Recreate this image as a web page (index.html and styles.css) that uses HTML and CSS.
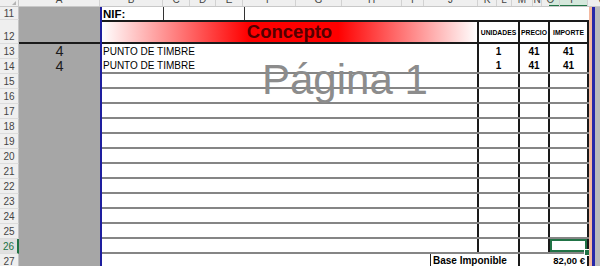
FILE: index.html
```html
<!DOCTYPE html>
<html lang="es">
<head>
<meta charset="utf-8">
<title>Factura</title>
<link rel="stylesheet" href="styles.css">
</head>
<body>
<div class="sheet">
  <div class="colhead">
    <div class="corner"><span class="tri"></span></div>
    <div class="ch w81"><span>A</span></div>
    <div class="ch w63"><span>B</span></div>
    <div class="ch w27"><span>C</span></div>
    <div class="ch w26"><span>D</span></div>
    <div class="ch w27"><span>E</span></div>
    <div class="ch w53"><span>F</span></div>
    <div class="ch w46"><span>G</span></div>
    <div class="ch w60"><span>H</span></div>
    <div class="ch w22"><span>I</span></div>
    <div class="ch w54"><span>J</span></div>
    <div class="ch w19"><span>K</span></div>
    <div class="ch w15"><span>L</span></div>
    <div class="ch w21"><span>M</span></div>
    <div class="ch w9"><span>N</span></div>
    <div class="ch w18"><span>O</span></div>
    <div class="ch w28"><span>P</span></div>
    <div class="ch w30"><span>Q</span></div>
  </div>
  <div class="grid">
    <div class="rowheads">
      <div class="rh r11">11</div>
      <div class="rh r12">12</div>
      <div class="rh">13</div>
      <div class="rh">14</div>
      <div class="rh">15</div>
      <div class="rh">16</div>
      <div class="rh">17</div>
      <div class="rh">18</div>
      <div class="rh">19</div>
      <div class="rh">20</div>
      <div class="rh">21</div>
      <div class="rh">22</div>
      <div class="rh">23</div>
      <div class="rh">24</div>
      <div class="rh">25</div>
      <div class="rh cur">26</div>
      <div class="rh">27</div>
    </div>
    <div class="cola">
      <div class="a11"></div>
      <div class="a12"></div>
      <div class="a-row">4</div>
      <div class="a-row">4</div>
    </div>
    <div class="pb"></div>
    <div class="content">
      <div class="row11">
        <div class="nif">NIF:</div>
        <div class="nifval"></div>
      </div>
      <div class="row12">
        <div class="concepto">Concepto</div>
        <div class="hd wk">UNIDADES</div>
        <div class="hd wm">PRECIO</div>
        <div class="hd wo">IMPORTE</div>
      </div>
      <div class="line first">
        <div class="c desc">PUNTO DE TIMBRE</div>
        <div class="c num wk">1</div>
        <div class="c num wm">41</div>
        <div class="c num wo">41</div>
      </div>
      <div class="line">
        <div class="c desc">PUNTO DE TIMBRE</div>
        <div class="c num wk">1</div>
        <div class="c num wm">41</div>
        <div class="c num wo">41</div>
      </div>
      <div class="line"><div class="c desc"></div><div class="c wk"></div><div class="c wm"></div><div class="c wo"></div></div>
      <div class="line"><div class="c desc"></div><div class="c wk"></div><div class="c wm"></div><div class="c wo"></div></div>
      <div class="line"><div class="c desc"></div><div class="c wk"></div><div class="c wm"></div><div class="c wo"></div></div>
      <div class="line"><div class="c desc"></div><div class="c wk"></div><div class="c wm"></div><div class="c wo"></div></div>
      <div class="line"><div class="c desc"></div><div class="c wk"></div><div class="c wm"></div><div class="c wo"></div></div>
      <div class="line"><div class="c desc"></div><div class="c wk"></div><div class="c wm"></div><div class="c wo"></div></div>
      <div class="line"><div class="c desc"></div><div class="c wk"></div><div class="c wm"></div><div class="c wo"></div></div>
      <div class="line"><div class="c desc"></div><div class="c wk"></div><div class="c wm"></div><div class="c wo"></div></div>
      <div class="line"><div class="c desc"></div><div class="c wk"></div><div class="c wm"></div><div class="c wo"></div></div>
      <div class="line"><div class="c desc"></div><div class="c wk"></div><div class="c wm"></div><div class="c wo"></div></div>
      <div class="line"><div class="c desc"></div><div class="c wk"></div><div class="c wm"></div><div class="c wo"></div></div>
      <div class="line"><div class="c desc"></div><div class="c wk"></div><div class="c wm"></div><div class="c wo sel"></div></div>
      <div class="row27">
        <div class="blank"></div>
        <div class="base">Base Imponible</div>
        <div class="total">82,00 €</div>
      </div>
    </div>
    <div class="salmon"></div>
    <div class="pb pb-r"></div>
    <div class="outside"></div>
  </div>
  <div class="watermark">Página 1</div>
</div>
</body>
</html>
```

FILE: styles.css
```css
* { box-sizing: border-box; }

body {
  margin: 0;
  background: #fff;
  font-family: "Liberation Sans", Arial, sans-serif;
}

.sheet {
  position: relative;
  width: 600px;
  height: 266px;
  overflow: hidden;
}

/* column header strip */
.colhead {
  display: flex;
  height: 7px;
  overflow: hidden;
  background-color: #efefef;
  background-image: linear-gradient(#217346, #217346), linear-gradient(#d5e8dc, #d5e8dc);
  background-size: 39px 1px, 39px 100%;
  background-position: 549px 100%, 549px 0;
  background-repeat: no-repeat;
  border-bottom: 1px solid #c8c8c8;
  font-size: 10px;
  color: #444;
}

.corner {
  flex: none;
  width: 19px;
  display: flex;
  justify-content: flex-end;
  align-items: flex-end;
  padding: 0 2px 1px 0;
  border-right: 1px solid #c8c8c8;
}

.tri {
  width: 0;
  height: 0;
  border-left: 4px solid transparent;
  border-bottom: 4px solid #b4b4b4;
}

.ch {
  flex: none;
  text-align: center;
  line-height: 10px;
  border-right: 1px solid #d2d2d2;
  overflow: hidden;
}

.ch span {
  display: block;
  margin-top: -5px;
}

.w81 { width: 81px; }
.w63 { width: 63px; }
.w27 { width: 27px; }
.w26 { width: 26px; }
.w53 { width: 53px; }
.w46 { width: 46px; }
.w60 { width: 60px; }
.w22 { width: 22px; }
.w54 { width: 54px; }
.w19 { width: 19px; }
.w15 { width: 15px; }
.w21 { width: 21px; }
.w9 { width: 9px; }
.w18 { width: 18px; }
.w28 { width: 28px; }
.w30 { width: 30px; }

/* body grid */
.grid {
  display: flex;
  height: 259px;
  overflow: hidden;
}

.rowheads {
  flex: none;
  width: 19px;
  display: flex;
  flex-direction: column;
  background: #efefef;
}

.rh {
  flex: none;
  height: 15px;
  display: flex;
  align-items: center;
  justify-content: center;
  font-size: 10px;
  color: #444;
  border-bottom: 1px solid #dcdcdc;
  border-right: 1px solid #c4c4c4;
}

.rh.r11 { height: 13px; }

.rh.r12 {
  height: 24px;
  align-items: flex-end;
  padding-bottom: 1px;
}

.rh.cur {
  color: #217346;
  background: #e0e0e0;
  border-right: 2px solid #217346;
}

.cola {
  flex: none;
  width: 81px;
  display: flex;
  flex-direction: column;
  background: #a6a6a6;
}

.a11 { flex: none; height: 13px; }

.a12 {
  flex: none;
  height: 24px;
  border-bottom: 2px solid #1a1a1a;
}

.a-row {
  flex: none;
  height: 15px;
  font-size: 14.5px;
  line-height: 15px;
  text-align: center;
  color: #1c1c1c;
}

.pb {
  flex: none;
  width: 2px;
  background: #1e1e9e;
}

.pb-r { width: 3px; background: #2626a8; }

.salmon {
  flex: none;
  width: 3px;
  background: #f3b8a0;
}

.outside {
  flex: none;
  width: 5px;
  background: #b8b8bc;
}

/* sheet content */
.content {
  flex: none;
  width: 487px;
  display: flex;
  flex-direction: column;
  overflow: hidden;
  font-size: 10px;
  color: #000;
}

.row11 {
  flex: none;
  height: 13px;
  display: flex;
}

.nif {
  width: 62px;
  border-right: 1px solid #333;
  font-weight: bold;
  font-size: 11.5px;
  line-height: 14px;
  padding-left: 1px;
}

.nifval {
  width: 81px;
  border-right: 1px solid #333;
}

.row12 {
  flex: none;
  height: 24px;
  display: flex;
  border-top: 2px solid #1a1a1a;
  border-bottom: 2px solid #1a1a1a;
}

.concepto {
  width: 377px;
  display: flex;
  align-items: center;
  justify-content: center;
  border-right: 2px solid #1a1a1a;
  background: linear-gradient(to right, #fff 0%, #ff0000 39%, #ff0000 63%, #fff 100%);
  font-size: 18.5px;
  font-weight: bold;
  color: #540000;
}

.hd {
  display: flex;
  align-items: center;
  justify-content: center;
  border-right: 2px solid #1a1a1a;
  font-size: 6.8px;
  font-weight: bold;
  white-space: nowrap;
}

.wk { width: 41px; }
.wm { width: 30px; }
.wo { width: 39px; }

.line {
  flex: none;
  height: 15px;
  display: flex;
  border-bottom: 2px solid #858585;
}

.line.first { border-bottom: none; }

.c {
  border-right: 2px solid #1a1a1a;
}

.desc {
  width: 377px;
  display: flex;
  align-items: center;
  padding-left: 1px;
  white-space: nowrap;
}

.num {
  display: flex;
  align-items: center;
  justify-content: center;
  font-weight: bold;
}

.sel {
  position: relative;
  box-shadow: inset 0 0 0 2px #217346;
}

.sel::after {
  content: "";
  position: absolute;
  right: -4px;
  bottom: -4px;
  width: 5px;
  height: 5px;
  background: #217346;
  border: 1px solid #fff;
}

.row27 {
  flex: none;
  height: 15px;
  display: flex;
}

.blank { width: 328px; }

.base {
  width: 90px;
  border-left: 1px solid #222;
  border-right: 2px solid #1a1a1a;
  padding-left: 2px;
  font-weight: bold;
  line-height: 14px;
  white-space: nowrap;
}

.total {
  width: 69px;
  border-right: 2px solid #1a1a1a;
  padding-right: 2px;
  text-align: right;
  font-weight: bold;
  font-size: 9.5px;
  line-height: 14px;
}

.watermark {
  position: absolute;
  left: 262px;
  top: 59px;
  font-size: 42px;
  line-height: 42px;
  color: #8c8c8c;
  pointer-events: none;
  white-space: nowrap;
}
```
